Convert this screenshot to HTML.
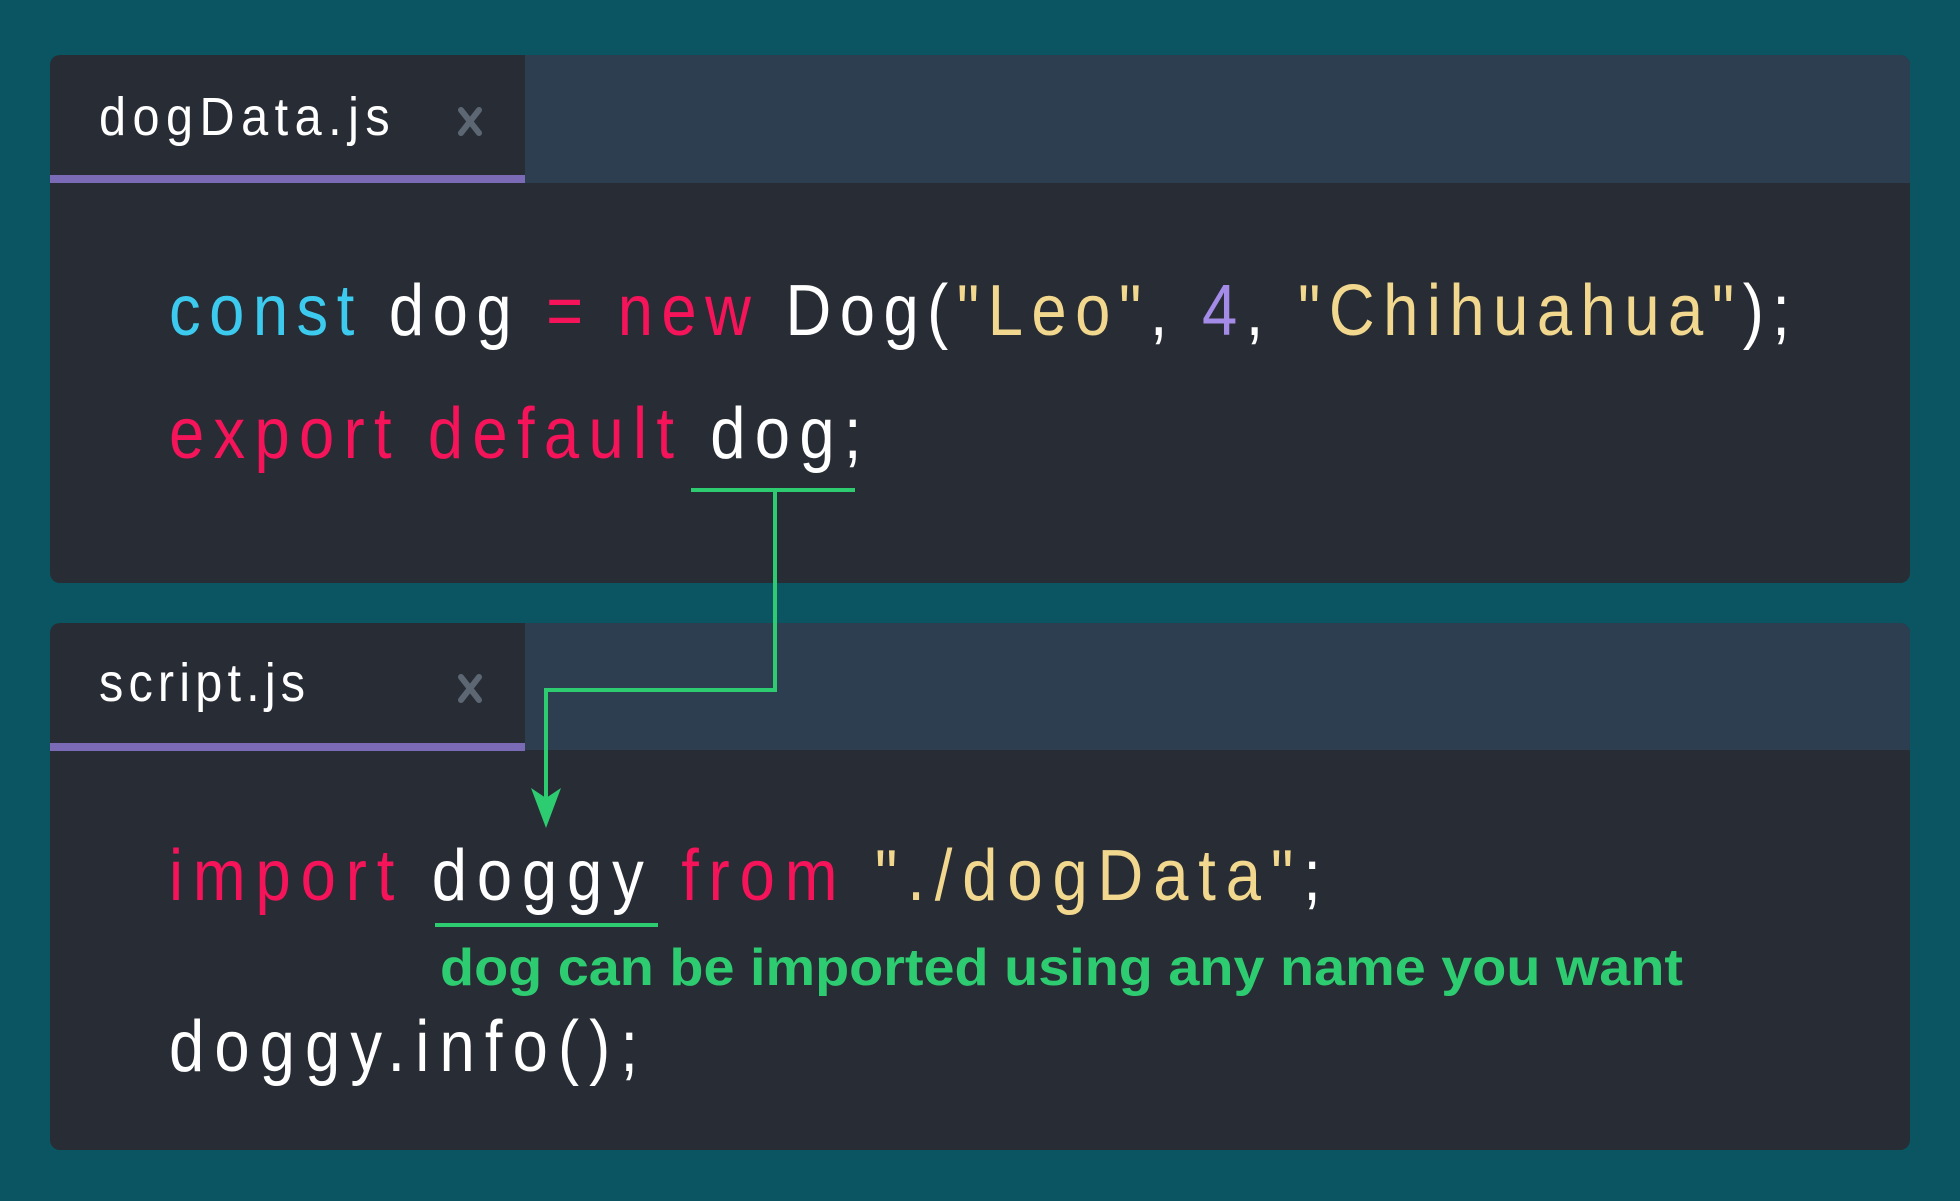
<!DOCTYPE html>
<html><head><meta charset="utf-8"><style>
html,body{margin:0;padding:0;background:#0a5561;}
svg{display:block}
text{font-family:"Liberation Sans",sans-serif;}
</style></head><body>
<svg width="1960" height="1201" viewBox="0 0 1960 1201" xmlns="http://www.w3.org/2000/svg">
<rect width="1960" height="1201" fill="#0a5561"/>
<rect x="50" y="55" width="1860" height="528" rx="10" fill="#282c34"/>
<path d="M525 55 H1900 a10 10 0 0 1 10 10 V183 H525 Z" fill="#2c3e50"/>
<rect x="50" y="175" width="475" height="8" fill="#7b6bb7"/>
<rect x="50" y="623" width="1860" height="527" rx="10" fill="#282c34"/>
<path d="M525 623 H1900 a10 10 0 0 1 10 10 V750 H525 Z" fill="#2c3e50"/>
<rect x="50" y="743" width="475" height="8" fill="#7b6bb7"/>
<g stroke="#5c6773" stroke-width="6" stroke-linecap="round">
<path d="M461 110 L479 133 M479 110 L461 133"/>
<path d="M461 677 L479 700 M479 677 L461 700"/>
</g>
<g transform="scale(0.9,1)">
<text x="110" y="135" font-size="54" fill="#ffffff" textLength="323" lengthAdjust="spacing">dogData.js</text>
<text x="110" y="701" font-size="54" fill="#ffffff" textLength="229" lengthAdjust="spacing">script.js</text>
</g>
<g font-size="72" transform="scale(0.88,1)">
<text x="192" y="335" textLength="1842" lengthAdjust="spacing"><tspan fill="#3ccbee">const</tspan><tspan fill="#fff"> dog </tspan><tspan fill="#f5145a">= new</tspan><tspan fill="#fff"> Dog(</tspan><tspan fill="#f2d88e">"Leo"</tspan><tspan fill="#fff">, </tspan><tspan fill="#a48be8">4</tspan><tspan fill="#fff">, </tspan><tspan fill="#f2d88e">"Chihuahua"</tspan><tspan fill="#fff">);</tspan></text>
<text x="192" y="458" textLength="787" lengthAdjust="spacing"><tspan fill="#f5145a">export default</tspan><tspan fill="#fff"> dog;</tspan></text>
<text x="192" y="900" textLength="1309" lengthAdjust="spacing"><tspan fill="#f5145a">import</tspan><tspan fill="#fff"> doggy </tspan><tspan fill="#f5145a">from</tspan><tspan fill="#f2d88e"> "./dogData"</tspan><tspan fill="#fff">;</tspan></text>
<text x="192" y="1071" fill="#fff" textLength="533" lengthAdjust="spacing">doggy.info();</text>
</g>
<text x="440" y="985" font-size="52" font-weight="bold" fill="#2ecc71" textLength="1243" lengthAdjust="spacingAndGlyphs">dog can be imported using any name you want</text>
<g stroke="#2ecc71" stroke-width="4" fill="none">
<line x1="691" y1="490" x2="855" y2="490"/>
<polyline points="775,490 775,690 546,690 546,800"/>
<line x1="435" y1="925" x2="658" y2="925"/>
</g>
<path d="M531 788 L546 828 L561 788 L546 798 Z" fill="#2ecc71"/>
</svg>
</body></html>
